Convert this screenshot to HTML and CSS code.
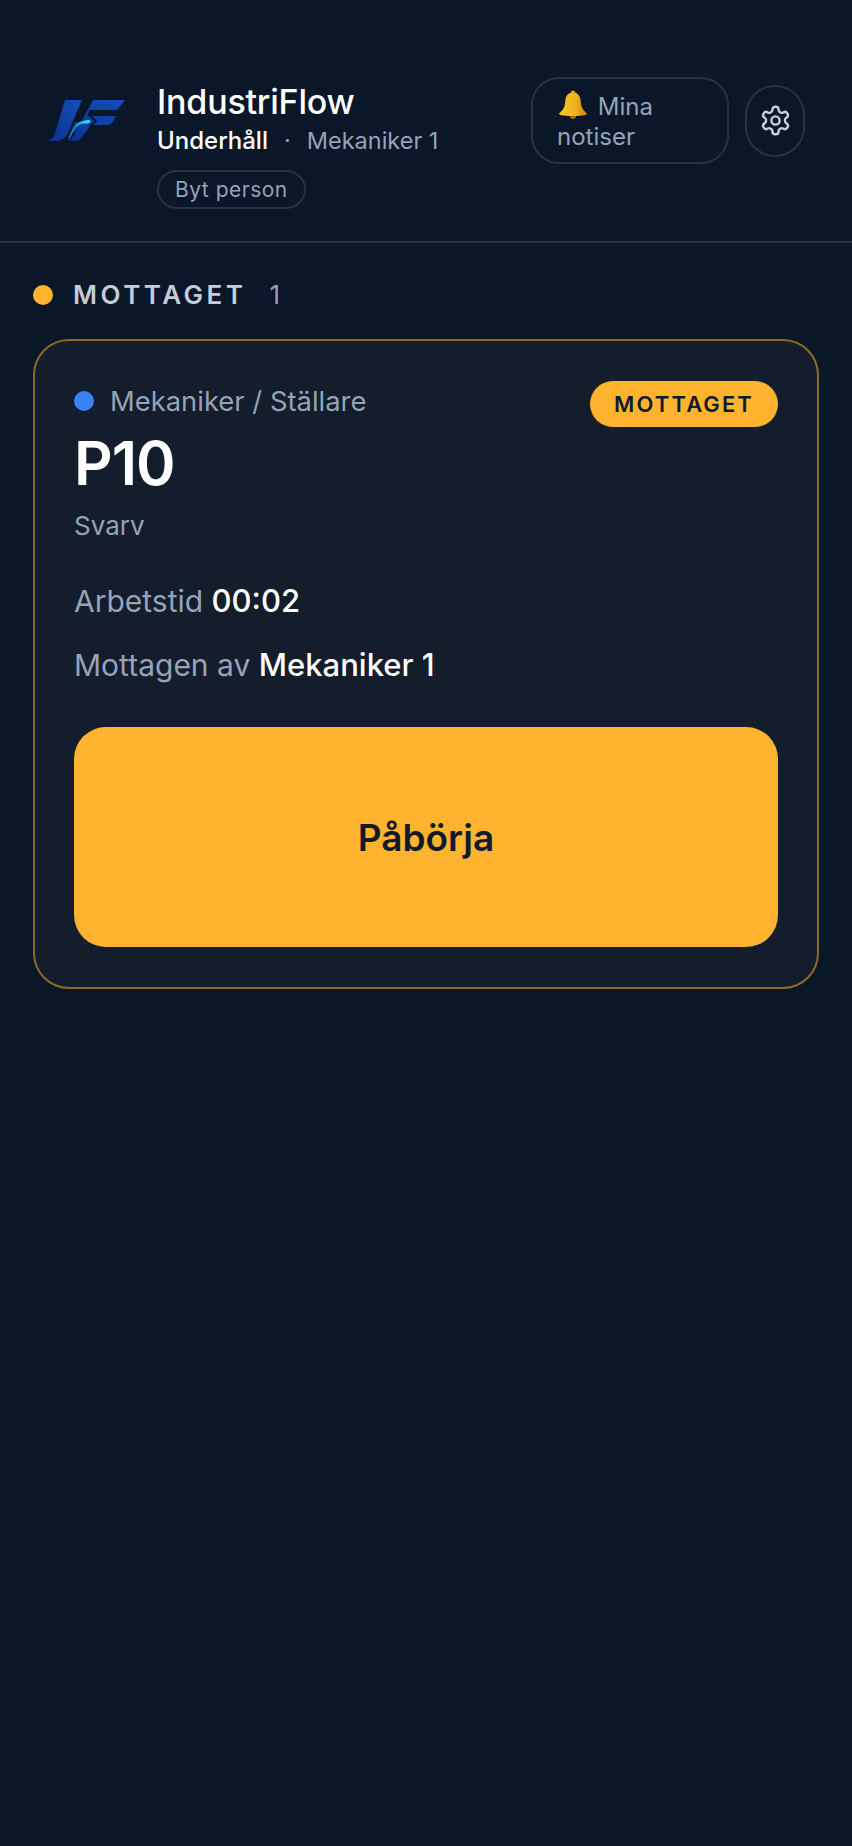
FILE: index.html
```html
<!DOCTYPE html>
<html lang="sv">
<head>
    <meta charset="UTF-8">
    <meta name="viewport" content="width=device-width, initial-scale=1.0">
    <title>IndustriFlow</title>
    <link rel="stylesheet" href="styles.css">
</head>
<body>

    <header class="topbar">
        <div class="brand">
            <svg class="logo" viewBox="0 0 78 42" aria-hidden="true">
                <defs>
                    <linearGradient id="logo_blue" x1="0" y1="1" x2="1" y2="0">
                        <stop offset="0" stop-color="#0a2f8c"/>
                        <stop offset="1" stop-color="#1450b8"/>
                    </linearGradient>
                    <linearGradient id="logo_flow" x1="0" y1="0" x2="1" y2="0">
                        <stop offset="0" stop-color="#1280cc"/>
                        <stop offset="1" stop-color="#45e4ea"/>
                    </linearGradient>
                </defs>
                <path fill="url(#logo_blue)" d="M17 0H34L20 33Q16 41 8 41H0Q5 39 7 33Z"/>
                <path fill="url(#logo_blue)" d="M45 0H77L70 9Q69 10 66 10H42L39 16H68L64 23Q62 25 59 25H43L34 37Q32 41 26 41H20Q24 39 26 35Z"/>
                <path fill="url(#logo_blue)" d="M27 22H42L34 32H23Z"/>
                <path fill="none" stroke="#0a1729" stroke-width="2" d="M42 16L48 21L42 26"/>
                <path fill="url(#logo_flow)" d="M20 40Q24 27 31 22.5Q34 20.5 41 20L43 21.5L40 23.5H35Q29 24.5 26 30L22 38Z"/>
            </svg>
            <div class="brand_text">
                <div class="app_name">IndustriFlow</div>
                <div class="user_line">
                    <span class="dept">Underhåll</span>
                    <span class="sep">·</span>
                    <span class="user">Mekaniker 1</span>
                </div>
                <button class="switch_btn">Byt person</button>
            </div>
        </div>
        <div class="actions">
            <button class="notify_btn"><svg class="bell" viewBox="0 0 30 30" aria-hidden="true">
                <defs>
                    <linearGradient id="bell_gold" x1="0" y1="0" x2="1" y2="0">
                        <stop offset="0" stop-color="#f7c52c"/>
                        <stop offset="0.6" stop-color="#f2b01e"/>
                        <stop offset="1" stop-color="#c98508"/>
                    </linearGradient>
                </defs>
                <circle cx="15" cy="26" r="3" fill="#a86a08"/>
                <circle cx="15" cy="2.8" r="2.3" fill="#e5a313"/>
                <path fill="url(#bell_gold)" d="M15 2.5C9 2.5 7.5 7 7.2 12C7 17 5 20 1 23.5C1 25 4 26 15 26C26 26 29 25 29 23.5C25 20 23 17 22.8 12C22.5 7 21 2.5 15 2.5Z"/>
            </svg> Mina notiser</button>
            <button class="gear_btn" aria-label="Inställningar">
                <svg class="gear" viewBox="0 0 24 24" fill="none" stroke="currentColor" stroke-width="1.75" stroke-linecap="round" stroke-linejoin="round">
                    <path d="M12.22 2h-.44a2 2 0 0 0-2 2v.18a2 2 0 0 1-1 1.73l-.43.25a2 2 0 0 1-2 0l-.15-.08a2 2 0 0 0-2.73.73l-.22.38a2 2 0 0 0 .73 2.73l.15.1a2 2 0 0 1 1 1.72v.51a2 2 0 0 1-1 1.74l-.15.09a2 2 0 0 0-.73 2.73l.22.38a2 2 0 0 0 2.73.73l.15-.08a2 2 0 0 1 2 0l.43.25a2 2 0 0 1 1 1.73V20a2 2 0 0 0 2 2h.44a2 2 0 0 0 2-2v-.18a2 2 0 0 1 1-1.73l.43-.25a2 2 0 0 1 2 0l.15.08a2 2 0 0 0 2.73-.73l.22-.39a2 2 0 0 0-.73-2.73l-.15-.08a2 2 0 0 1-1-1.74v-.5a2 2 0 0 1 1-1.74l.15-.09a2 2 0 0 0 .73-2.73l-.22-.38a2 2 0 0 0-2.73-.73l-.15.08a2 2 0 0 1-2 0l-.43-.25a2 2 0 0 1-1-1.73V4a2 2 0 0 0-2-2z"/>
                    <circle cx="12" cy="12" r="3"/>
                </svg>
            </button>
        </div>
    </header>

    <main class="content">
        <div class="section_head">
            <span class="section_dot"></span>
            <span class="section_title">MOTTAGET</span>
            <span class="section_count">1</span>
        </div>

        <div class="job_card">
            <div class="card_top">
                <div class="role">
                    <span class="role_dot"></span>
                    <span>Mekaniker / Ställare</span>
                </div>
                <span class="status_pill">MOTTAGET</span>
            </div>
            <div class="job_code">P10</div>
            <div class="job_machine">Svarv</div>
            <div class="job_meta first">Arbetstid <strong>00:02</strong></div>
            <div class="job_meta">Mottagen av <strong>Mekaniker 1</strong></div>
            <button class="start_btn">Påbörja</button>
        </div>
    </main>

</body>
</html>
```

FILE: styles.css
```css
* {
    box-sizing: border-box;
}

html, body {
    height: 100%;
}

body {
    margin: 0;
    background-color: #0a1729;
    color: #fff;
    font-family: Inter, "Noto Sans", sans-serif;
}

button {
    font-family: inherit;
    background: none;
    cursor: pointer;
}

/* Header */
.topbar {
    display: flex;
    justify-content: space-between;
    align-items: flex-start;
    height: 243px;
    padding: 77px 47px 0 48px;
    border-bottom: 2px solid #263244;
}

.brand {
    display: flex;
    gap: 31px;
}

.logo {
    width: 78px;
    height: 42px;
    margin-top: 23px;
    flex-shrink: 0;
}

.brand_text {
    display: flex;
    flex-direction: column;
    align-items: flex-start;
}

.app_name {
    font-size: 34px;
    font-weight: 500;
    line-height: 28px;
    margin-top: 11px;
    letter-spacing: -0.2px;
}

.user_line {
    display: flex;
    font-size: 23.5px;
    line-height: 28px;
    margin-top: 11px;
}

.dept {
    color: #fff;
    font-size: 24px;
    font-weight: 500;
}

.sep {
    color: #94a3b8;
    margin: 0 16px;
}

.user {
    color: #94a3b8;
}

.switch_btn {
    margin-top: 15px;
    height: 39px;
    padding: 0 16px;
    border: 2px solid #263244;
    border-radius: 20px;
    color: #94a3b8;
    font-size: 21px;
    letter-spacing: 0.5px;
    white-space: nowrap;
}

.actions {
    display: flex;
    align-items: center;
    gap: 16px;
}

.notify_btn {
    width: 198px;
    height: 87px;
    padding: 0 24px;
    border: 2px solid #263244;
    border-radius: 28px;
    color: #94a3b8;
    font-size: 24px;
    line-height: 30px;
    text-align: left;
}

.bell {
    width: 30px;
    height: 30px;
    vertical-align: -5px;
    margin-right: 3px;
    margin-left: 1px;
}

.gear_btn {
    display: flex;
    align-items: center;
    justify-content: center;
    width: 60px;
    height: 72px;
    padding: 0;
    border: 2px solid #263244;
    border-radius: 30px;
    color: #c6d0dd;
}

.gear {
    width: 33px;
    height: 33px;
}

/* Section */
.content {
    padding: 0 33px;
}

.section_head {
    display: flex;
    align-items: center;
    height: 96px;
    padding-top: 7px;
}

.section_dot {
    width: 20px;
    height: 20px;
    border-radius: 50%;
    background-color: #ffb32e;
    margin-right: 20px;
}

.section_title {
    color: #c4ccd8;
    font-size: 26px;
    font-weight: 600;
    letter-spacing: 3.5px;
    margin-right: 23px;
}

.section_count {
    color: #94a3b8;
    font-size: 26px;
}

/* Card */
.job_card {
    display: flex;
    flex-direction: column;
    height: 650px;
    padding: 40px 39px;
    background-color: #131d2c;
    border: 2px solid #8f6a24;
    border-radius: 36px;
}

.card_top {
    display: flex;
    justify-content: space-between;
    align-items: center;
    height: 46px;
}

.role {
    display: flex;
    align-items: center;
    gap: 16px;
    color: #94a3b8;
    font-size: 27.4px;
    margin-top: -7px;
}

.role_dot {
    width: 20px;
    height: 20px;
    border-radius: 50%;
    background-color: #3b82f6;
}

.status_pill {
    display: flex;
    align-items: center;
    height: 46px;
    padding: 0 24px;
    border-radius: 23px;
    background-color: #ffb32e;
    color: #0f1a2b;
    font-size: 22px;
    font-weight: 600;
    letter-spacing: 2.1px;
}

.job_code {
    font-size: 60px;
    font-weight: 600;
    line-height: 60px;
    margin-top: 6px;
    letter-spacing: -1px;
}

.job_machine {
    color: #94a3b8;
    font-size: 26px;
    line-height: 32px;
    margin-top: 17px;
}

.job_meta {
    color: #94a3b8;
    font-size: 30px;
    line-height: 36px;
    margin-top: 28px;
}

.job_meta.first {
    margin-top: 41px;
}

.job_meta strong {
    color: #fff;
    font-size: 31px;
    font-weight: 500;
}

.start_btn {
    flex: 1;
    margin-top: 44px;
    border: none;
    border-radius: 32px;
    background-color: #ffb32e;
    color: #0f1a2b;
    font-size: 37px;
    font-weight: 600;
}
```
